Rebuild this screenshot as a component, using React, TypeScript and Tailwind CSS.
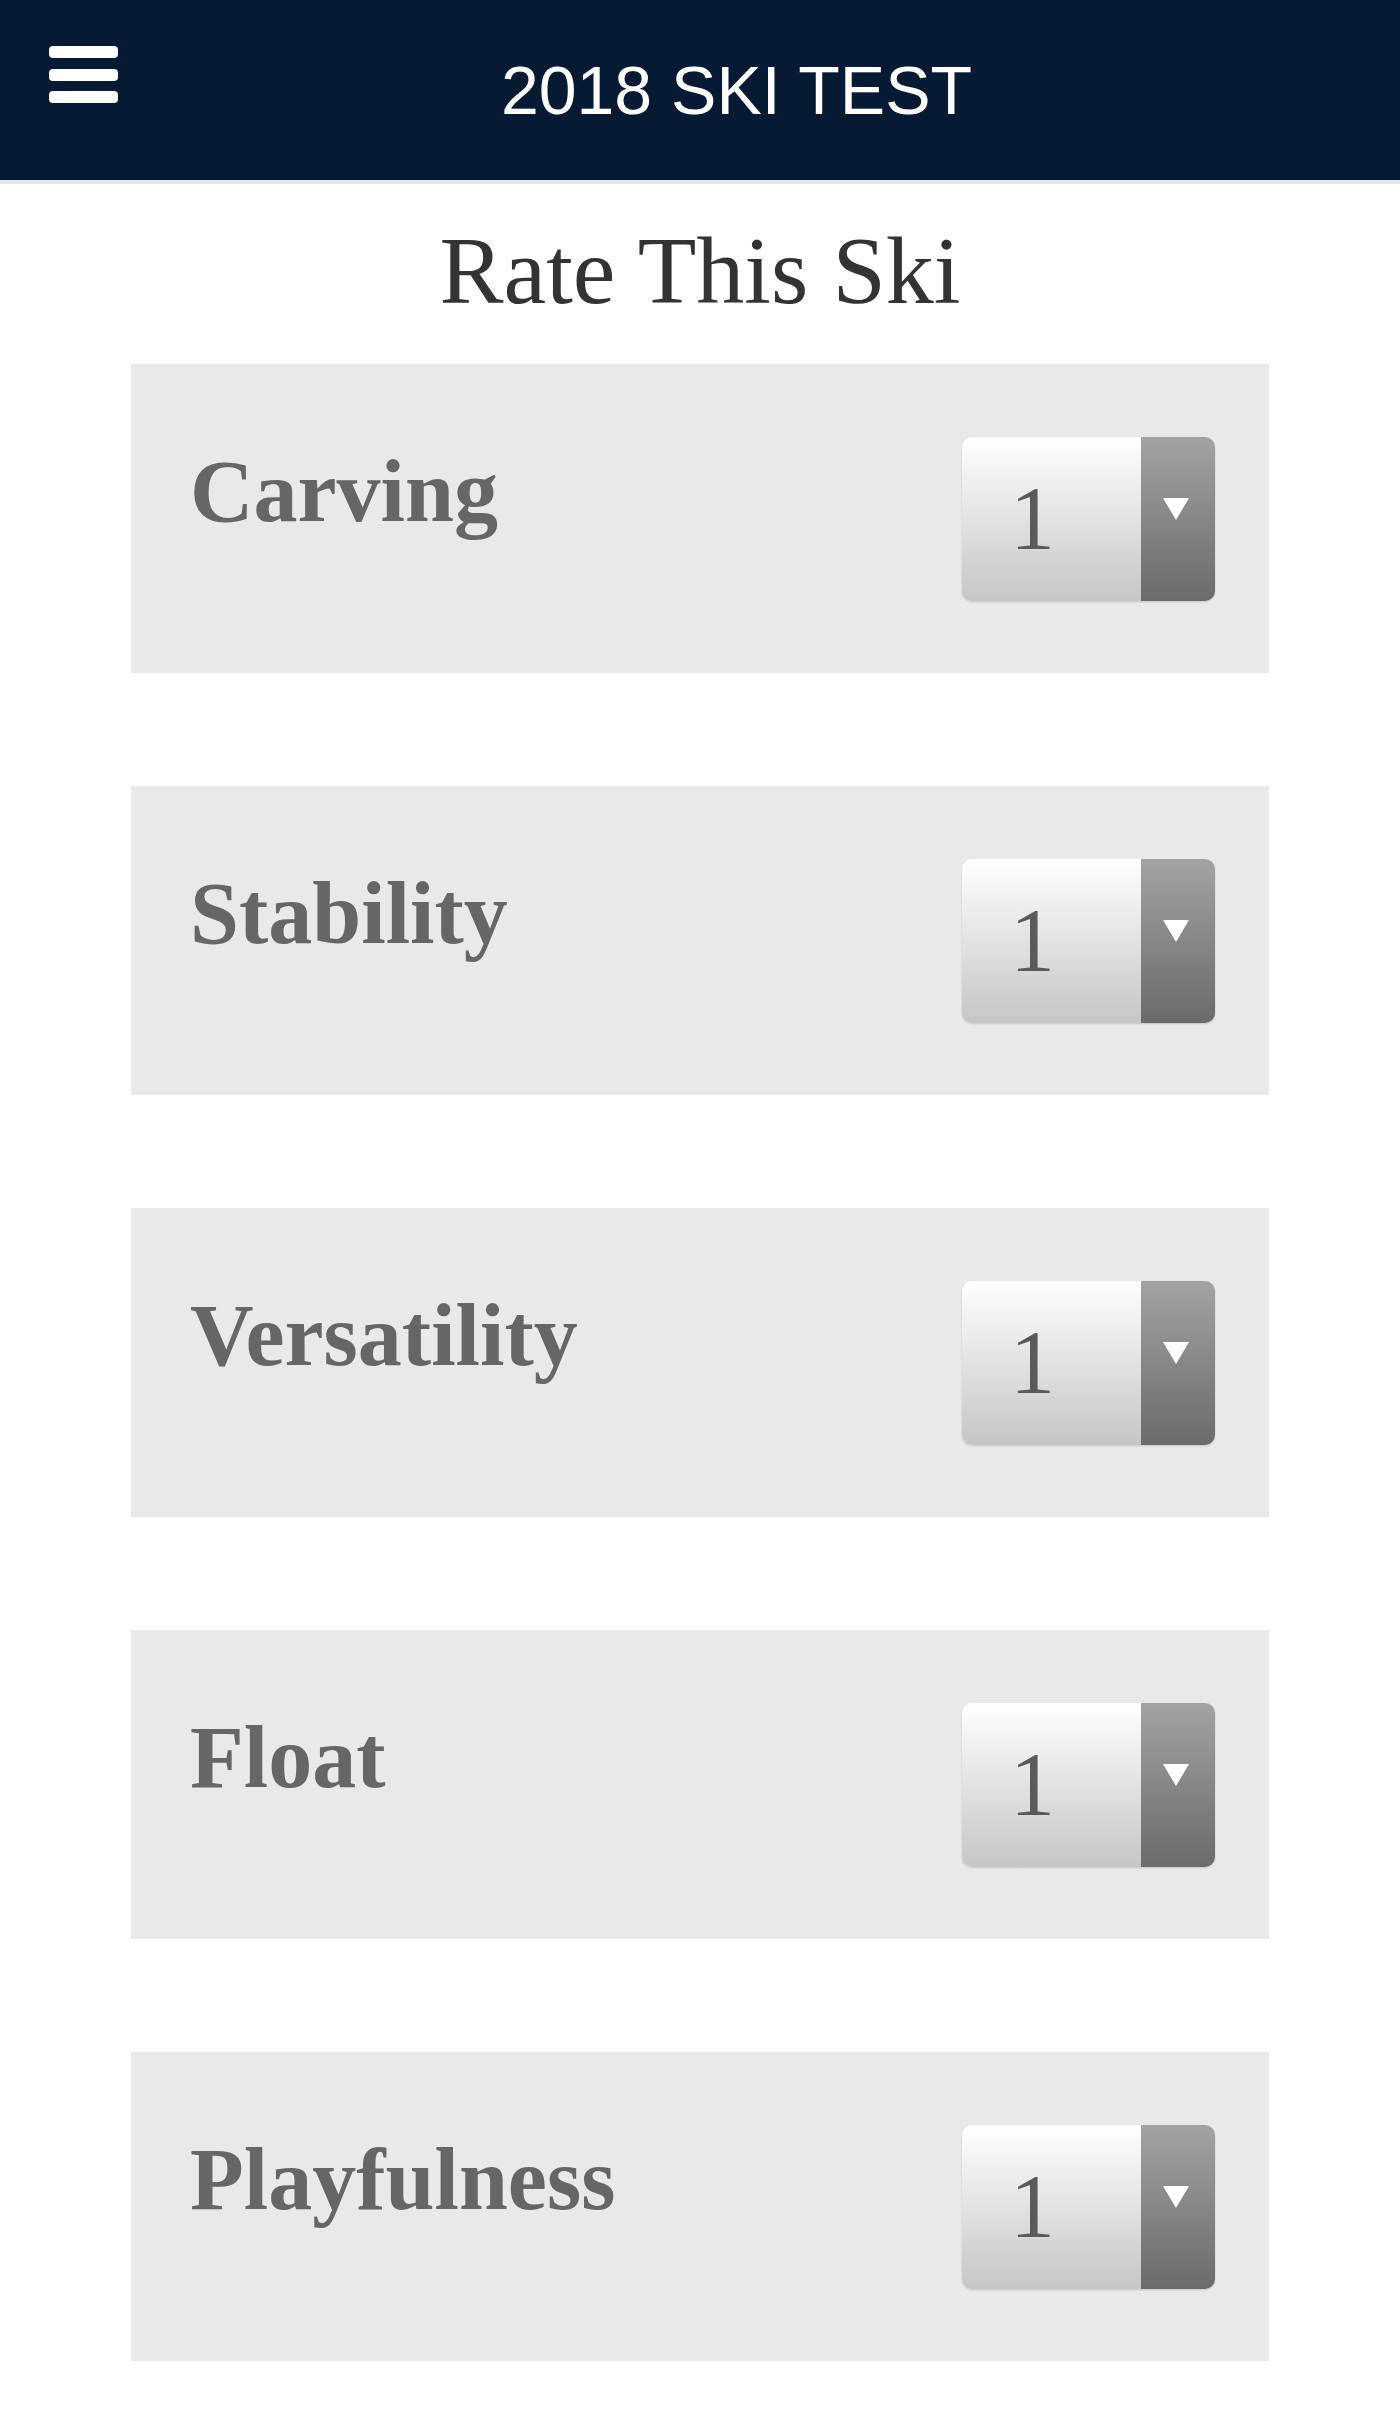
import React from 'react'

const criteria = ['Carving', 'Stability', 'Versatility', 'Float', 'Playfulness']

function RatingSelect({ value }: { value: number }) {
  return (
    <div className="flex h-[164px] w-[253px] shrink-0 overflow-hidden rounded-[10px] shadow-[0_1px_2px_rgba(0,0,0,0.15)]">
      <div className="flex flex-1 items-center bg-gradient-to-b from-white to-[#c6c6c6] pl-[48px]">
        <span className="font-['Liberation_Serif',serif] text-[90px] leading-none text-[#5a5a5a]">
          {value}
        </span>
      </div>
      <div className="flex w-[74px] justify-center bg-gradient-to-b from-[#a3a3a3] to-[#6b6b6b] pt-[61px] pr-[4px]">
        <svg width="26" height="22" viewBox="0 0 26 22">
          <polygon points="0,0 26,0 13,22" fill="#ffffff" />
        </svg>
      </div>
    </div>
  )
}

export default function App() {
  return (
    <div className="min-h-screen bg-white font-['Liberation_Sans',sans-serif]">
      {/* Header */}
      <header className="flex h-[184px] border-b-[4px] border-[#e3e6ea] bg-[#071a33] pl-[49px] pr-[45px]">
        <button className="mt-[46px] flex h-[57px] w-[69px] flex-col justify-between self-start">
          <span className="h-[12px] w-full rounded-[4px] bg-white" />
          <span className="h-[12px] w-full rounded-[4px] bg-white" />
          <span className="h-[12px] w-full rounded-[4px] bg-white" />
        </button>
        <div className="flex flex-1 items-center justify-center">
          <h1 className="text-[68px] leading-none text-white">2018 SKI TEST</h1>
        </div>
      </header>

      {/* Main */}
      <main className="pb-[52px]">
        <h2 className="mt-[39px] mb-[45px] text-center font-['Liberation_Serif',serif] text-[96px] leading-none text-[#333333]">
          Rate This Ski
        </h2>

        <div className="mx-auto flex w-[1138px] flex-col gap-[113px]">
          {criteria.map((name) => (
            <div
              key={name}
              className="flex h-[309px] items-center justify-between bg-[#e9e9e9] pl-[59px] pr-[54px]"
            >
              <span className="mb-[54px] font-['Liberation_Serif',serif] text-[88px] font-bold leading-none text-[#666666]">
                {name}
              </span>
              <RatingSelect value={1} />
            </div>
          ))}
        </div>
      </main>
    </div>
  )
}
